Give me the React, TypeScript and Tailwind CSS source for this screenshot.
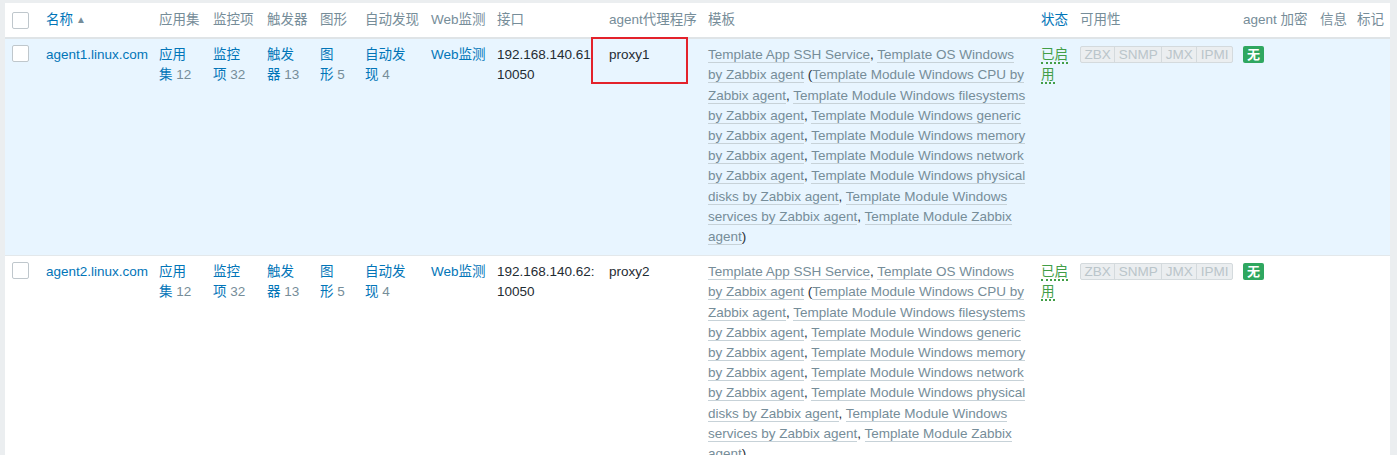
import React from 'react';

const templates = [
  'Template App SSH Service',
  'Template OS Windows by Zabbix agent',
];

const children = [
  'Template Module Windows CPU by Zabbix agent',
  'Template Module Windows filesystems by Zabbix agent',
  'Template Module Windows generic by Zabbix agent',
  'Template Module Windows memory by Zabbix agent',
  'Template Module Windows network by Zabbix agent',
  'Template Module Windows physical disks by Zabbix agent',
  'Template Module Windows services by Zabbix agent',
  'Template Module Zabbix agent',
];

const hosts = [
  { name: 'agent1.linux.com', ip: '192.168.140.61', proxy: 'proxy1', selected: true },
  { name: 'agent2.linux.com', ip: '192.168.140.62:', proxy: 'proxy2', selected: false },
];

const Check = () => (
  <span className="block w-[17px] h-[17px] rounded-[2px] border border-[#bfc7cc] bg-white" />
);

const TLink = ({ children }: { children: React.ReactNode }) => (
  <span className="text-[#768d99] border-b border-[#c7d2d8]">{children}</span>
);

const Templates = () => (
  <div className="w-[320px]">
    {templates.map((t, i) => (
      <React.Fragment key={t}>
        <TLink>{t}</TLink>
        {i === 0 ? ', ' : ' '}
      </React.Fragment>
    ))}
    (
    {children.map((t, i) => (
      <React.Fragment key={t}>
        <TLink>{t}</TLink>
        {i < children.length - 1 ? ', ' : ''}
      </React.Fragment>
    ))}
    )
  </div>
);

const Count = ({ a, b, n }: { a: string; b: string; n: number }) => (
  <span className="text-[#0275b8]">
    {a}
    <br />
    {b} <span className="text-[#768d99]">{n}</span>
  </span>
);

const th = 'px-[5px] pt-[7px] pb-[7px] text-left font-normal text-[#768d99] whitespace-nowrap';
const td = 'px-[5px] pt-[6px] pb-[8px] align-top';

export default function App() {
  return (
    <div
      className="min-h-screen bg-[#ebeef0] pl-[5px] pr-[7px] pt-[3px]"
      style={{ fontFamily: '"Liberation Sans", Arial, "Noto Sans CJK SC", sans-serif' }}
    >
      <div className="bg-white text-[13.5px] leading-[20.2px] text-[#1f2c33]">
        <table className="table-fixed w-full border-collapse">
          <colgroup>
            <col className="w-[36px]" />
            <col className="w-[113px]" />
            <col className="w-[54px]" />
            <col className="w-[54px]" />
            <col className="w-[53px]" />
            <col className="w-[45px]" />
            <col className="w-[66px]" />
            <col className="w-[66px]" />
            <col className="w-[112px]" />
            <col className="w-[99px]" />
            <col className="w-[333px]" />
            <col className="w-[39px]" />
            <col className="w-[163px]" />
            <col className="w-[77px]" />
            <col className="w-[37px]" />
            <col />
          </colgroup>
          <thead>
            <tr className="border-b-2 border-[#dfe4e7]">
              <th className="pl-[7px] py-[7px] align-middle">
                <Check />
              </th>
              <th className={th}>
                <span className="text-[#0275b8]">名称</span>
                <span className="text-[#768d99] text-[10px] ml-[3px] align-[1px]">▲</span>
              </th>
              <th className={th}>应用集</th>
              <th className={th}>监控项</th>
              <th className={th}>触发器</th>
              <th className={th}>图形</th>
              <th className={th}>自动发现</th>
              <th className={th}>Web监测</th>
              <th className={th}>接口</th>
              <th className={th}>agent代理程序</th>
              <th className={th}>模板</th>
              <th className={th}>
                <span className="text-[#0275b8]">状态</span>
              </th>
              <th className={th}>可用性</th>
              <th className={th}>agent 加密</th>
              <th className={th}>信息</th>
              <th className={th}>标记</th>
            </tr>
          </thead>
          <tbody>
            {hosts.map((h) => (
              <tr
                key={h.name}
                className={h.selected ? 'bg-[#e8f5ff] border-b border-[#e3e8eb]' : 'border-b border-[#e3e8eb]'}
              >
                <td className="pl-[7px] pt-[6px] pb-[8px] align-top">
                  <Check />
                </td>
                <td className={td}>
                  <span className="text-[#0275b8] whitespace-nowrap">{h.name}</span>
                </td>
                <td className={td}>
                  <Count a="应用" b="集" n={12} />
                </td>
                <td className={td}>
                  <Count a="监控" b="项" n={32} />
                </td>
                <td className={td}>
                  <Count a="触发" b="器" n={13} />
                </td>
                <td className={td}>
                  <Count a="图" b="形" n={5} />
                </td>
                <td className={td}>
                  <Count a="自动发" b="现" n={4} />
                </td>
                <td className={td}>
                  <span className="text-[#0275b8] whitespace-nowrap">Web监测</span>
                </td>
                <td className={td}>
                  {h.ip}
                  <br />
                  10050
                </td>
                <td className={`${td} relative`}>
                  {h.proxy}
                  {h.selected && (
                    <div className="absolute left-[-13px] top-[-2px] w-[97px] h-[47px] border-2 border-[#e3222b]" />
                  )}
                </td>
                <td className={td}>
                  <Templates />
                </td>
                <td className={td}>
                  <span className="text-[#429e47] border-b-2 border-dotted border-[#429e47]">已启</span>
                  <br />
                  <span className="text-[#429e47] border-b-2 border-dotted border-[#429e47]">用</span>
                </td>
                <td className={td}>
                  <div className="flex w-fit mt-[1px] border border-[#d4dadd] rounded-[2px] bg-[#ebeef0] text-[#bac5ca] text-[13.5px] leading-[15px]">
                    <span className="px-[3.5px] border-r border-[#d4dadd]">ZBX</span>
                    <span className="px-[3.5px] border-r border-[#d4dadd]">SNMP</span>
                    <span className="px-[3.5px] border-r border-[#d4dadd]">JMX</span>
                    <span className="px-[3.5px]">IPMI</span>
                  </div>
                </td>
                <td className={td}>
                  <span className="inline-flex items-center justify-center mt-[1px] w-[21px] h-[17px] rounded-[2px] bg-[#2fa760] text-white text-[13px] font-bold leading-none">
                    无
                  </span>
                </td>
                <td className={td}></td>
                <td className={td}></td>
              </tr>
            ))}
          </tbody>
        </table>
      </div>
    </div>
  );
}
